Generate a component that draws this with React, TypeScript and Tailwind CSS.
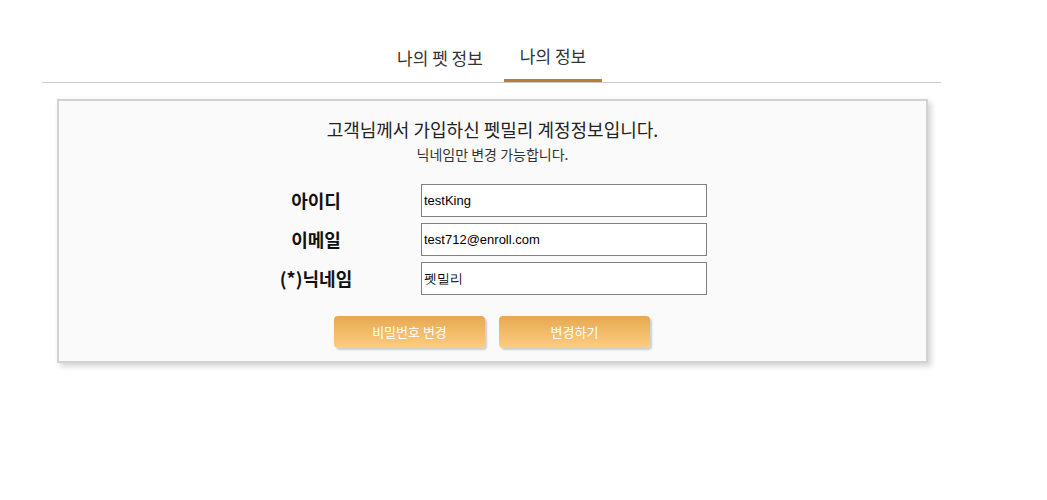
const kr = "font-['Noto_Sans_CJK_KR',sans-serif]"

const rows = [
  { label: "아이디", value: "testKing" },
  { label: "이메일", value: "test712@enroll.com" },
  { label: "(*)닉네임", value: "펫밀리" },
]

export default function App() {
  return (
    <div className={`w-[1047px] h-[500px] bg-white ${kr} text-[#222]`}>
      <div className="w-[899px] ml-[42px] pt-[40px]">
        {/* tabs */}
        <div className="flex justify-center gap-[19px] border-b border-[#cccccc] pl-[14px]">
          <button className="w-[90px] h-[42px] text-[17px] text-[#333] pb-[7px]">나의 펫 정보</button>
          <button className="w-[98px] h-[42px] text-[17px] text-[#333] pb-[7px] border-b-[3px] border-[#bf7a36]">
            나의 정보
          </button>
        </div>

        {/* card */}
        <div className="ml-[15px] mt-[16px] w-[871px] h-[264px] bg-[#fafafa] border-2 border-[#d2d2d2] shadow-[3px_3px_6px_rgba(0,0,0,0.18)] flex flex-col items-center">
          <p className="mt-[16px] text-[18px] leading-[24px] text-[#222]">고객님께서 가입하신 펫밀리 계정정보입니다.</p>
          <p className="mt-[3px] text-[14px] leading-[20px] text-[#333]">닉네임만 변경 가능합니다.</p>

          <div className="mt-[20px] flex flex-col gap-[6px] mr-[27px]">
            {rows.map((r) => (
              <div key={r.label} className="flex items-center">
                <label className="w-[130px] text-center text-[18px] font-bold text-[#111]">{r.label}</label>
                <input
                  readOnly
                  value={r.value}
                  className="ml-[40px] w-[286px] h-[33px] border border-[#808080] bg-white px-[2px] text-[13px] text-black font-['Liberation_Sans',sans-serif] outline-none"
                />
              </div>
            ))}
          </div>

          <div className="mt-[21px] flex gap-[14px] ml-[-1px]">
            <button className="w-[151px] h-[32px] rounded-[4px] bg-gradient-to-b from-[#e7a850] to-[#fdcd80] text-white text-[13px] shadow-[2px_2px_2px_rgba(0,0,0,0.18)]">
              비밀번호 변경
            </button>
            <button className="w-[151px] h-[32px] rounded-[4px] bg-gradient-to-b from-[#e7a850] to-[#fdcd80] text-white text-[13px] shadow-[2px_2px_2px_rgba(0,0,0,0.18)]">
              변경하기
            </button>
          </div>
        </div>
      </div>
    </div>
  )
}
